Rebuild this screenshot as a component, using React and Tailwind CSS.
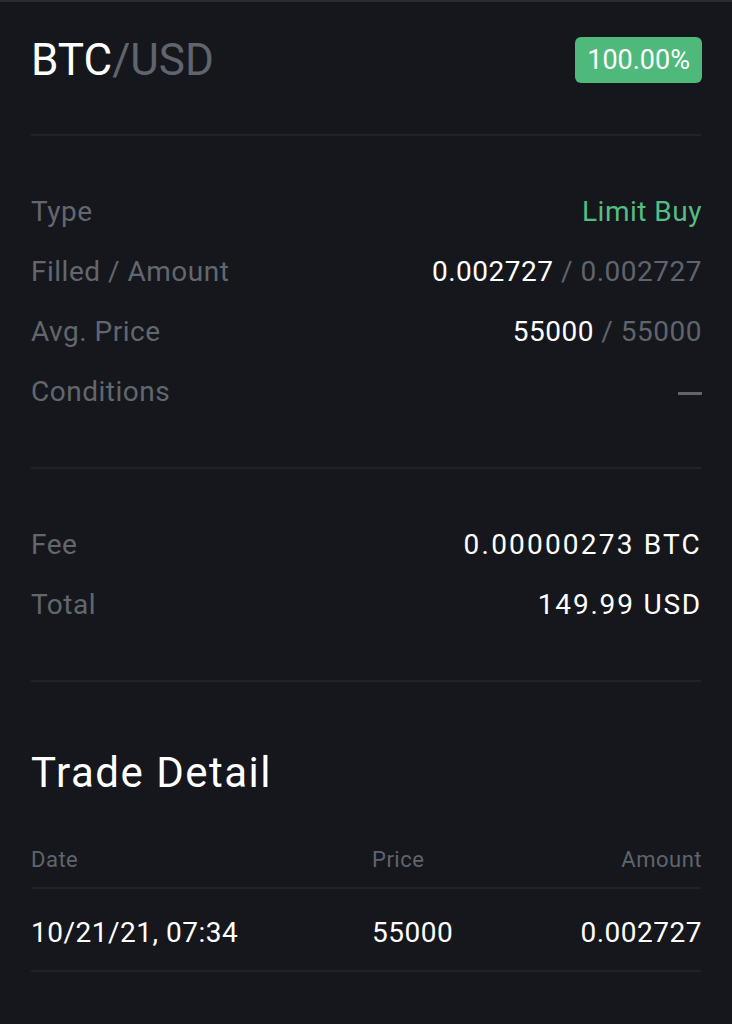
import React from 'react';

// ── Order detail (dark) ───────────────────────────────────────────────────
const rows = [
  { label: 'Type', value: <span className="text-[#55bd83]">Limit Buy</span> },
  { label: 'Filled / Amount', value: <><span className="text-white">0.002727</span><span className="text-[#5f646d]"> / 0.002727</span></> },
  { label: 'Avg. Price', value: <><span className="text-white">55000</span><span className="text-[#5f646d]"> / 55000</span></> },
  { label: 'Conditions', value: <span className="inline-block w-[24px] h-[3px] bg-[#5f646d] align-middle" /> },
];

function Row({ label, children }) {
  return (
    <div className="flex items-center justify-between h-[60px]">
      <span className="text-[#62676f]">{label}</span>
      <span className="-mr-[1px]">{children}</span>
    </div>
  );
}

function Divider() {
  return <div className="h-[2px] bg-[#1f2228]" />;
}

export default function App() {
  return (
    <div className="min-h-[1024px] bg-[#15171c] border-t-2 border-[#2a2d33] text-[28px] tracking-[0.5px] text-white"
      style={{ fontFamily: 'Roboto, "Liberation Sans", sans-serif' }}>
      <div className="px-[31px]">
        <div className="flex items-center justify-between pt-[35px] pb-[51px]">
          <h1 className="text-[44px] leading-none tracking-[0px]">
            BTC<span className="text-[#5f646d]">/USD</span>
          </h1>
          <span className="bg-[#4eb97a] rounded-[6px] px-[12px] h-[46px] flex items-center text-[27px] tracking-[0px] -mr-[1px]">100.00%</span>
        </div>
        <Divider />
        <div className="pt-[46px] pb-[45px]">
          {rows.map(r => <Row key={r.label} label={r.label}>{r.value}</Row>)}
        </div>
        <Divider />
        <div className="pt-[46px] pb-[45px]">
          <Row label="Fee"><span className="text-white tracking-[2.2px]">0.00000273 BTC</span></Row>
          <Row label="Total"><span className="text-white tracking-[1.8px]">149.99 USD</span></Row>
        </div>
        <Divider />
        <h2 className="text-[42px] tracking-[1.5px] pt-[70px] leading-[42px] h-[112px]">Trade Detail</h2>
        <div className="grid grid-cols-[341px_1fr_auto] items-center h-[56px] mt-[37px] text-[22px] tracking-[0.5px] text-[#5f646d]">
          <span>Date</span><span>Price</span><span className="text-right -mr-[1px]">Amount</span>
        </div>
        <Divider />
        <div className="grid grid-cols-[341px_1fr_auto] items-center h-[81px] pt-[6px] text-white">
          <span>10/21/21, 07:34</span><span>55000</span><span className="text-right -mr-[1px]">0.002727</span>
        </div>
        <Divider />
      </div>
    </div>
  );
}
